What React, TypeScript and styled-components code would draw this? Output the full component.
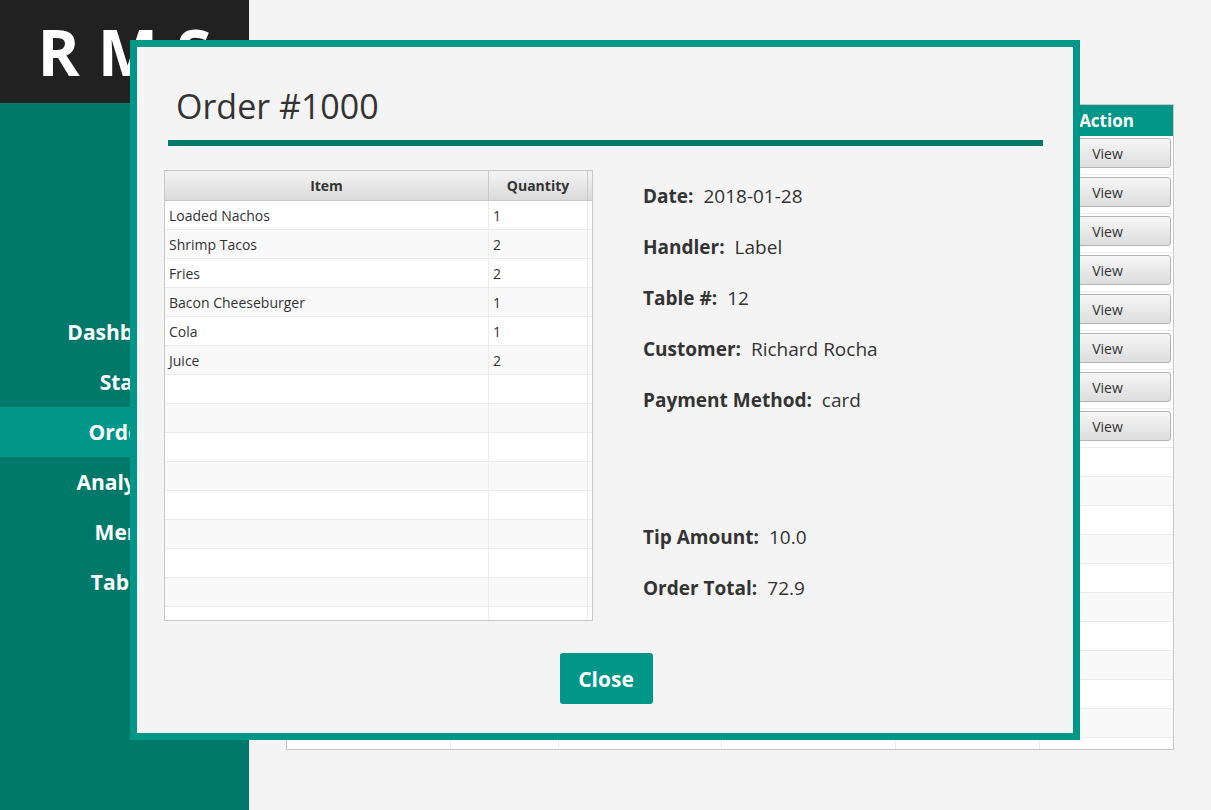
import React from "react";
import styled, { createGlobalStyle } from "styled-components";

const GlobalStyle = createGlobalStyle`
  html, body { margin: 0; padding: 0; background: #f4f4f4; }
  body { font-family: "Open Sans", "Noto Sans", Arial, sans-serif; color: #333; }
  * { box-sizing: border-box; }
`;

const Shell = styled.div`
  position: relative;
  display: flex;
  width: 1211px;
  height: 810px;
  overflow: hidden;
  background: #f4f4f4;
`;

const Sidebar = styled.aside`
  width: 249px;
  flex: none;
  display: flex;
  flex-direction: column;
  background: #00796b;
`;

const Brand = styled.div`
  height: 103px;
  background: #212121;
  color: #fff;
  display: flex;
  align-items: center;
  justify-content: center;
  font-weight: 700;
  font-size: 64px;
  letter-spacing: 18px;
  padding-left: 18px;
`;

const Nav = styled.nav`
  margin-top: 204px;
  display: flex;
  flex-direction: column;
`;

const NavItem = styled.div<{ $active?: boolean }>`
  height: 50px;
  display: flex;
  align-items: center;
  justify-content: center;
  color: #fff;
  font-weight: 700;
  font-size: 21px;
  background: ${(p) => (p.$active ? "#009688" : "transparent")};
`;

const Main = styled.main`
  flex: 1;
  padding: 104px 0 0 37px;
`;

const OrdersTable = styled.div`
  width: 888px;
  height: 646px;
  border: 1px solid #c8c8c8;
  background: #fff;
  overflow: hidden;
`;

const bgCols = "164px 108px 163px 174px 144px 1fr";

const OrdersHead = styled.div`
  display: grid;
  grid-template-columns: ${bgCols};
  height: 31px;
  background: #009688;
`;

const HeadCell = styled.div`
  display: flex;
  align-items: center;
  justify-content: center;
  color: #fff;
  font-weight: 700;
  font-size: 17px;
`;

const OrdersRow = styled.div<{ $h: number; $alt: boolean }>`
  display: grid;
  grid-template-columns: ${bgCols};
  height: ${(p) => p.$h}px;
  background: ${(p) => (p.$alt ? "#f9f9f9" : "#fff")};
  border-bottom: 1px solid #ececec;
`;

const BgCell = styled.div`
  border-right: 1px solid #ececec;
  &:last-child {
    border-right: none;
  }
`;

const ActionCell = styled.div`
  padding: 2px 2px 6px 4px;
`;

const ViewButton = styled.button`
  width: 100%;
  height: 30px;
  border: 1px solid #b4b4b4;
  border-radius: 3px;
  background: linear-gradient(#f6f6f6, #dddddd);
  color: #333;
  font-family: "Open Sans", sans-serif;
  font-size: 14px;
  padding: 0;
`;

const ModalBox = styled.div`
  position: absolute;
  left: 130px;
  top: 40px;
  width: 950px;
  height: 700px;
  border: 7px solid #009688;
  background: #f4f4f4;
  display: flex;
  flex-direction: column;
  z-index: 5;
`;

const ModalHeader = styled.div`
  margin: 0 30px 0 31px;
  padding: 37px 0 12px 8px;
  border-bottom: 6px solid #00796b;
`;

const Title = styled.h1`
  margin: 0;
  font-weight: 400;
  font-size: 34px;
  line-height: 44px;
  color: #333;
`;

const ModalBody = styled.div`
  display: flex;
  margin-top: 24px;
  padding-left: 27px;
`;

const ItemTable = styled.div`
  width: 429px;
  height: 451px;
  flex: none;
  border: 1px solid #c8c8c8;
  background: #fff;
  overflow: hidden;
`;

const itemCols = "324px 99px 1fr";

const ItemHead = styled.div`
  display: grid;
  grid-template-columns: ${itemCols};
  height: 30px;
  background: linear-gradient(#f3f3f3, #dadada);
  border-bottom: 1px solid #c8c8c8;
`;

const ItemHeadCell = styled.div`
  display: flex;
  align-items: center;
  justify-content: center;
  font-weight: 700;
  font-size: 14px;
  color: #333;
  border-right: 1px solid #c8c8c8;
  &:last-child {
    border-right: none;
  }
`;

const ItemRow = styled.div<{ $alt: boolean }>`
  display: grid;
  grid-template-columns: ${itemCols};
  height: 29px;
  background: ${(p) => (p.$alt ? "#f9f9f9" : "#fff")};
  border-bottom: 1px solid #ececec;
`;

const ItemCell = styled.div`
  display: flex;
  align-items: center;
  padding-left: 4px;
  font-size: 14px;
  color: #333;
  border-right: 1px solid #ececec;
  &:last-child {
    border-right: none;
  }
`;

const Details = styled.div`
  margin-left: 50px;
  display: flex;
  flex-direction: column;
`;

const DetailGroup = styled.div<{ $gap?: number }>`
  display: flex;
  flex-direction: column;
  margin-top: ${(p) => p.$gap ?? 0}px;
`;

const DetailRow = styled.div`
  height: 51px;
  display: flex;
  align-items: center;
  font-size: 19px;
  color: #333;
`;

const DetailLabel = styled.span`
  font-weight: 700;
  margin-right: 10px;
`;

const ModalFooter = styled.div`
  display: flex;
  justify-content: center;
  margin-top: 32px;
`;

const CloseButton = styled.button`
  width: 93px;
  height: 51px;
  border: none;
  border-radius: 3px;
  background: #009688;
  color: #fff;
  font-family: "Open Sans", sans-serif;
  font-weight: 700;
  font-size: 21px;
  padding: 0;
  margin-left: 2px;
`;

const navItems = ["Dashboard", "Staff", "Orders", "Analytics", "Menu", "Tables"];

const items: [string, string][] = [
  ["Loaded Nachos", "1"],
  ["Shrimp Tacos", "2"],
  ["Fries", "2"],
  ["Bacon Cheeseburger", "1"],
  ["Cola", "1"],
  ["Juice", "2"],
];

const bgHeaders = ["Order #", "Date", "Customer", "Handler", "Total", "Action"];

export default function App() {
  const itemRows = Array.from({ length: 16 }, (_, i) => items[i] ?? ["", ""]);
  return (
    <>
      <GlobalStyle />
      <Shell>
        <Sidebar>
          <Brand>RMS</Brand>
          <Nav>
            {navItems.map((n) => (
              <NavItem key={n} $active={n === "Orders"}>
                {n}
              </NavItem>
            ))}
          </Nav>
        </Sidebar>
        <Main>
          <OrdersTable>
            <OrdersHead>
              {bgHeaders.map((h) => (
                <HeadCell key={h}>{h}</HeadCell>
              ))}
            </OrdersHead>
            {Array.from({ length: 19 }, (_, i) => {
              const hasView = i < 8;
              return (
                <OrdersRow key={i} $h={hasView ? 39 : 29} $alt={!hasView && i % 2 === 1}>
                  {bgHeaders.map((h, c) =>
                    c === 5 ? (
                      <ActionCell key={c}>{hasView && <ViewButton>View</ViewButton>}</ActionCell>
                    ) : (
                      <BgCell key={c} />
                    )
                  )}
                </OrdersRow>
              );
            })}
          </OrdersTable>
        </Main>

        <ModalBox>
          <ModalHeader>
            <Title>Order #1000</Title>
          </ModalHeader>
          <ModalBody>
            <ItemTable>
              <ItemHead>
                <ItemHeadCell>Item</ItemHeadCell>
                <ItemHeadCell>Quantity</ItemHeadCell>
                <ItemHeadCell />
              </ItemHead>
              {itemRows.map(([name, qty], i) => (
                <ItemRow key={i} $alt={i % 2 === 1}>
                  <ItemCell>{name}</ItemCell>
                  <ItemCell>{qty}</ItemCell>
                  <ItemCell />
                </ItemRow>
              ))}
            </ItemTable>
            <Details>
              <DetailGroup>
                <DetailRow>
                  <DetailLabel>Date:</DetailLabel>2018-01-28
                </DetailRow>
                <DetailRow>
                  <DetailLabel>Handler:</DetailLabel>Label
                </DetailRow>
                <DetailRow>
                  <DetailLabel>Table #:</DetailLabel>12
                </DetailRow>
                <DetailRow>
                  <DetailLabel>Customer:</DetailLabel>Richard Rocha
                </DetailRow>
                <DetailRow>
                  <DetailLabel>Payment Method:</DetailLabel>card
                </DetailRow>
              </DetailGroup>
              <DetailGroup $gap={86}>
                <DetailRow>
                  <DetailLabel>Tip Amount:</DetailLabel>10.0
                </DetailRow>
                <DetailRow>
                  <DetailLabel>Order Total:</DetailLabel>72.9
                </DetailRow>
              </DetailGroup>
            </Details>
          </ModalBody>
          <ModalFooter>
            <CloseButton>Close</CloseButton>
          </ModalFooter>
        </ModalBox>
      </Shell>
    </>
  );
}
